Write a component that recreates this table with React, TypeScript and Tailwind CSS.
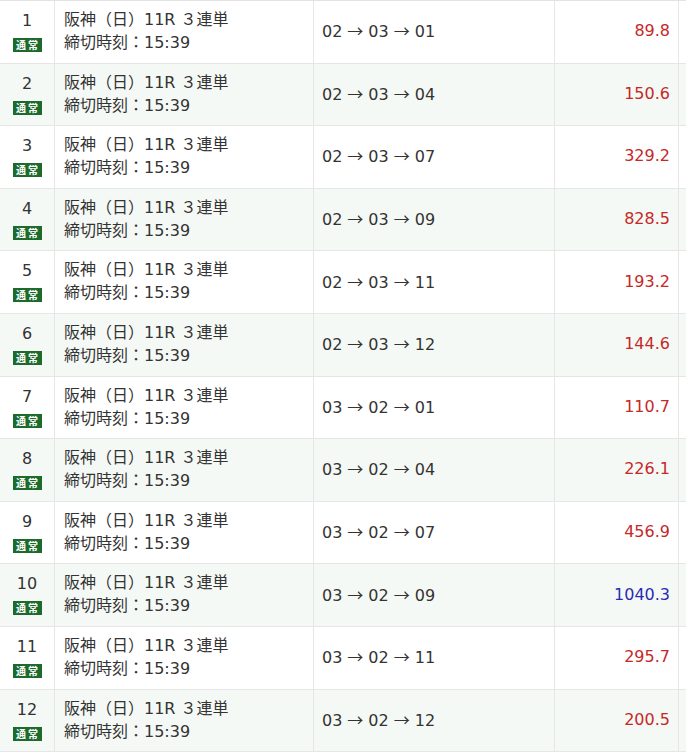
import React from "react";

const rows = [
  { n: 1, combo: ["02", "03", "01"], odds: "89.8", blue: false },
  { n: 2, combo: ["02", "03", "04"], odds: "150.6", blue: false },
  { n: 3, combo: ["02", "03", "07"], odds: "329.2", blue: false },
  { n: 4, combo: ["02", "03", "09"], odds: "828.5", blue: false },
  { n: 5, combo: ["02", "03", "11"], odds: "193.2", blue: false },
  { n: 6, combo: ["02", "03", "12"], odds: "144.6", blue: false },
  { n: 7, combo: ["03", "02", "01"], odds: "110.7", blue: false },
  { n: 8, combo: ["03", "02", "04"], odds: "226.1", blue: false },
  { n: 9, combo: ["03", "02", "07"], odds: "456.9", blue: false },
  { n: 10, combo: ["03", "02", "09"], odds: "1040.3", blue: true },
  { n: 11, combo: ["03", "02", "11"], odds: "295.7", blue: false },
  { n: 12, combo: ["03", "02", "12"], odds: "200.5", blue: false },
];

const cjk = { fontFamily: '"Noto Sans CJK JP", sans-serif' };

function Arrow() {
  return (
    <span className="inline-block w-[16px] mx-[5px] text-center" style={cjk}>
      →
    </span>
  );
}

export default function App() {
  return (
    <div
      className="w-[686px] h-[755px] bg-white overflow-hidden text-[#333333]"
      style={{ fontFamily: '"DejaVu Sans", "Noto Sans CJK JP", sans-serif' }}
    >
      <div className="border-t border-[#e3e3e3]">
        {rows.map((r, i) => (
          <div
            key={r.n}
            className={`flex h-[62.6px] border-b border-[#e6e6e6] ${
              i % 2 === 1 ? "bg-[#f5f9f5]" : "bg-white"
            }`}
          >
            <div className="w-[55px] shrink-0 border-r border-[#e6e6e6] flex flex-col items-center pt-[9px]">
              <div className="text-[16px] leading-[22px]">{r.n}</div>
              <div
                className="mt-[6px] w-[29px] h-[14px] bg-[#1d6b2c] text-white text-[10px] leading-[14px] font-bold flex items-center justify-center tracking-[2px] pl-[2px]"
                style={cjk}
              >
                通常
              </div>
            </div>
            <div className="w-[259px] shrink-0 border-r border-[#e6e6e6] pl-[9px] pt-[7px] text-[16px] leading-[23px]">
              <div>阪神（日）11R ３連単</div>
              <div>締切時刻：15:39</div>
            </div>
            <div className="w-[241px] shrink-0 border-r border-[#e6e6e6] pl-[8px] flex items-center text-[16px] pb-[1px]">
              <span className="whitespace-nowrap">
                {r.combo[0]}
                <Arrow />
                {r.combo[1]}
                <Arrow />
                {r.combo[2]}
              </span>
            </div>
            <div
              className={`w-[124px] shrink-0 border-r border-[#e6e6e6] pr-[8px] flex items-center justify-end text-[16px] pb-[1px] ${
                r.blue ? "text-[#2a2ab5]" : "text-[#c62828]"
              }`}
            >
              {r.odds}
            </div>
            <div className="flex-1" />
          </div>
        ))}
      </div>
    </div>
  );
}
